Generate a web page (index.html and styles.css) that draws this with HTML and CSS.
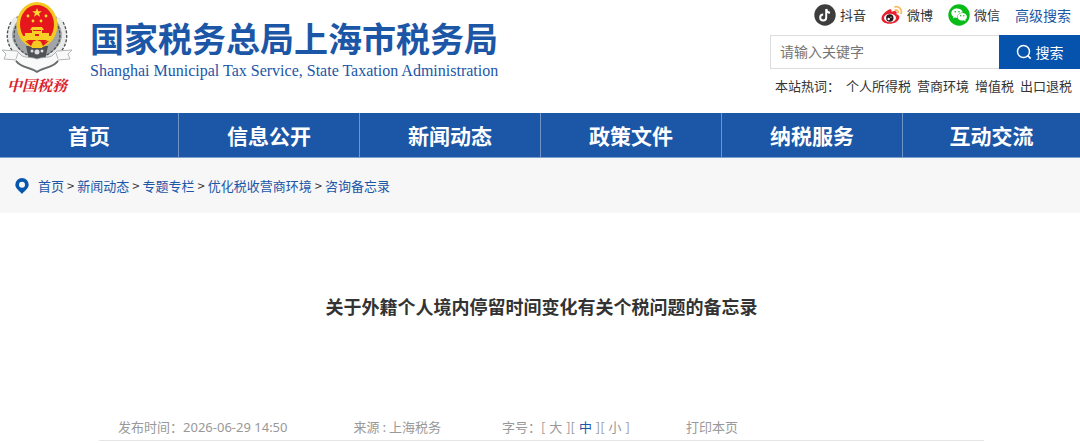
FILE: index.html
```html
<!DOCTYPE html>
<html lang="zh-CN">
<head>
<meta charset="utf-8">
<meta name="viewport" content="width=device-width, initial-scale=1">
<title>国家税务总局上海市税务局</title>
<link rel="stylesheet" href="styles.css">
</head>
<body>
<header class="header">
  <a class="brand" href="#">
    <span class="brand-mark">
      <svg class="emblem" viewBox="0 0 74 74" aria-hidden="true">
        <path d="M17 16C5 30 6 50 27 61h19C67 50 68 30 56 16z" fill="#a2a5a7"/>
        <g fill="none" stroke="#e9eaea" stroke-width="5" stroke-dasharray="3 2" stroke-linecap="round">
          <path d="M15 20C5 34 9 49 27 58M59 20C69 34 65 49 47 58"/>
        </g>
        <g fill="none" stroke="#4b4e50" stroke-width="1.300" stroke-dasharray="3 1.500">
          <path d="M11 22C3 37 8 52 25 61M63 22C71 37 66 52 49 61M16 26C11 39 16 49 29 56M58 26C63 39 58 49 45 56"/>
        </g>
        <path d="M26 46h22l-3 14H29z" fill="#505355"/>
        <g fill="#dcddde"><circle cx="32" cy="51" r="1.500"/><circle cx="37" cy="52" r="2.500"/><circle cx="42" cy="51" r="1.500"/></g>
        <ellipse cx="37" cy="25" rx="20.500" ry="23" fill="#f3c922"/>
        <ellipse cx="37" cy="24.500" rx="17" ry="19.500" fill="#e5171c"/>
        <path fill="#ffd92e" d="M37 8l1.300 3.300h3.500l-2.800 2.100 1.100 3.400-3.100-2.100-3.100 2.100 1.100-3.400-2.800-2.100h3.500z"/>
        <g fill="#ffd92e"><circle cx="28" cy="16" r="1.400"/><circle cx="46" cy="16" r="1.400"/><circle cx="33" cy="21" r="1.400"/><circle cx="41" cy="21" r="1.400"/></g>
        <path fill="#f7cf27" d="M32 27h10l2 3h-2v3h7v4H25v-4h7v-3h-2zM22 36h30l-2 4H24z"/>
        <path fill="#e5171c" d="M33 30h8v1h-8zM35 34h4v2h-4z"/>
        <path fill="#f3c922" d="M30 43l7-3 7 3-2 5H32z"/>
        <path fill="#e5171c" d="M25 41l8 1-2 4zM49 41l-8 1 2 4z"/>
        <path fill="#f9f9f9" stroke="#a0a3a5" stroke-width=".8" d="M2 50l15 1 5 5c5 2 11 1 15 3 4-2 10-1 15-3l5-5 15-1-4 4 2 5-12 1-6 6c-5 1-10 2-15 5-5-3-10-4-15-5l-6-6-12-1 2-5z"/>
        <path fill="none" stroke="#6a6d6f" stroke-width="1.800" d="M16 61c5 7 14 6 21 11 7-5 16-4 21-11"/>
        <path fill="none" stroke="#b9bbbc" d="M18 53l-2 6M56 53l2 6"/>
      </svg>
      <span class="brand-script">中国税務</span>
    </span>
    <span class="brand-text">
      <span class="brand-cn">国家税务总局上海市税务局</span>
      <span class="brand-en" lang="en">Shanghai Municipal Tax Service, State Taxation Administration</span>
    </span>
  </a>
  <div class="tools">
    <nav class="social" aria-label="社交媒体">
      <a class="social-link" href="#">
        <svg class="social-icon" viewBox="0 0 22 22" aria-hidden="true"><circle cx="11" cy="11" r="10.700" fill="#3d3d3d"/><path d="M12.200 5v8.500a3 3 0 1 1-3-3M12.200 5c.3 2.300 1.700 3.500 3.800 3.700" fill="none" stroke="#fff" stroke-width="2"/></svg>
        抖音</a>
      <a class="social-link" href="#">
        <svg class="social-icon" viewBox="0 0 22 22" aria-hidden="true"><path fill="#e71f2e" d="M9 5.300c1.200-.5 2 .5 1.400 2.500 3-1.200 5.700-1.200 5.200 1.600-.2.700 0 .9.800 1.200 1.700.7 2.300 2 1.800 3.600-1 3.300-5 5.500-9.700 5.500C4 19.700.5 17.500.5 14.200.5 11 5.300 6.400 9 5.300z"/><ellipse cx="9" cy="14" rx="6" ry="4.200" fill="#fff"/><circle cx="8.800" cy="14" r="3.700" fill="#28191b"/><circle cx="7.700" cy="15" r="1.200" fill="#fff"/><circle cx="10" cy="13.200" r=".6" fill="#fff"/><path d="M14 2.800c4-.8 7.300 2.600 6.200 6.500M14.300 6c2-.3 3.200 1 2.700 2.700" fill="none" stroke="#f9bd62" stroke-width="1.800" stroke-linecap="round"/></svg>
        微博</a>
      <a class="social-link" href="#">
        <svg class="social-icon" viewBox="0 0 22 22" aria-hidden="true"><circle cx="11" cy="11" r="10.700" fill="#09bb16"/><path fill="#fff" d="M9 4.500c-3.200 0-5.700 2-5.700 4.600 0 1.500.8 2.800 2.100 3.700l-.5 1.800 2-1c.8.200 1.500.3 2.300.3-.6-3 2-5.600 5.600-5.500C14.300 6 11.900 4.500 9 4.500z"/><path fill="#fff" d="M14.200 9c-2.700 0-4.700 1.700-4.700 3.800s2 3.800 4.700 3.800c.6 0 1.200-.1 1.700-.3l1.700.9-.4-1.500c1.100-.7 1.700-1.700 1.700-2.900 0-2.100-2-3.800-4.700-3.800z"/><g fill="#09bb16"><circle cx="7.200" cy="7.800" r=".8"/><circle cx="11" cy="7.800" r=".8"/><circle cx="12.700" cy="11.800" r=".7"/><circle cx="15.800" cy="11.800" r=".7"/></g></svg>
        微信</a>
      <a class="advanced" href="#">高级搜索</a>
    </nav>
    <form class="search" role="search">
      <input class="search-input" type="text" placeholder="请输入关键字" aria-label="请输入关键字">
      <button class="search-button" type="button">
        <svg class="search-icon" viewBox="0 0 16 16" aria-hidden="true"><circle cx="7.500" cy="7.500" r="6" fill="none" stroke="#fff" stroke-width="1.500"/><path d="M11.700 11.700l3 3" stroke="#fff" stroke-width="1.700"/></svg>
        搜索</button>
    </form>
    <div class="hot">
      <span class="hot-label">本站热词：</span>
      <a href="#">个人所得税</a>
      <a href="#">营商环境</a>
      <a href="#">增值税</a>
      <a href="#">出口退税</a>
    </div>
  </div>
</header>
<nav class="main-nav" aria-label="主导航">
  <a href="#">首页</a>
  <a href="#">信息公开</a>
  <a href="#">新闻动态</a>
  <a href="#">政策文件</a>
  <a href="#">纳税服务</a>
  <a href="#">互动交流</a>
</nav>
<nav class="crumbs" aria-label="当前位置">
  <svg class="pin" viewBox="0 0 14 16" aria-hidden="true"><path fill="#0756ad" fill-rule="evenodd" d="M7 0a6.700 6.700 0 0 1 6.700 6.800C13.700 10.500 9.500 13 7 16 4.500 13 .3 10.500.3 6.800A6.700 6.700 0 0 1 7 0zm0 3.800a3 3 0 1 0 0 6 3 3 0 0 0 0-6z"/></svg>
  <a href="#">首页</a><span>&gt;</span>
  <a href="#">新闻动态</a><span>&gt;</span>
  <a href="#">专题专栏</a><span>&gt;</span>
  <a href="#">优化税收营商环境</a><span>&gt;</span>
  <a href="#">咨询备忘录</a>
</nav>
<main class="article">
  <h1 class="article-title">关于外籍个人境内停留时间变化有关个税问题的备忘录</h1>
  <div class="meta">
    <div class="meta-date"><span>发布时间：</span><time datetime="2026-06-29T14:50">2026-06-29 14:50</time></div>
    <div class="meta-source">来源 : 上海税务</div>
    <div class="meta-size">
      <span>字号：</span>
      <span>[ <button type="button">大</button> ]</span>
      <span>[ <button class="is-active" type="button">中</button> ]</span>
      <span>[ <button type="button">小</button> ]</span>
    </div>
    <button class="print" type="button">打印本页</button>
  </div>
</main>
</body>
</html>
```
FILE: styles.css
```css
* {
  box-sizing: border-box;
}

body {
  margin: 0;
  background: #fff;
  color: #333;
  font-family: "Noto Sans CJK SC", sans-serif;
  font-size: 13px;
  line-height: 20px;
}

a {
  color: inherit;
  text-decoration: none;
}

button {
  padding: 0;
  border: 0;
  background: none;
  color: inherit;
  font: inherit;
  cursor: pointer;
}

.header {
  display: flex;
  justify-content: space-between;
  min-height: 113px;
}

.brand {
  display: flex;
  gap: 16px;
}

.brand-mark {
  display: flex;
  flex-direction: column;
  align-items: center;
  width: 74px;
}

.emblem {
  width: 74px;
  height: 74px;
}

.brand-script {
  color: #d9202a;
  font-family: "Noto Serif CJK SC", "Noto Sans CJK SC", serif;
  font-size: 15px;
  font-style: italic;
  font-weight: 700;
  line-height: 22px;
}

.brand-text {
  display: flex;
  flex-direction: column;
  padding-top: 17px;
  color: #1b56a7;
  white-space: nowrap;
}

.brand-cn {
  font-size: 34px;
  font-weight: 700;
  line-height: 42px;
}

.brand-en {
  font-family: "Liberation Serif", serif;
  font-size: 16px;
  line-height: 24px;
}

.tools {
  display: flex;
  flex-direction: column;
  width: 310px;
}

.social {
  display: flex;
  align-items: center;
  justify-content: flex-end;
  gap: 15px;
  height: 30px;
  margin-bottom: 5px;
  padding-right: 9px;
}

.social-link {
  display: flex;
  align-items: center;
  gap: 4px;
}

.social-icon {
  width: 22px;
  height: 22px;
}

.advanced {
  color: #1b56a7;
  font-size: 14px;
}

.search {
  display: flex;
  height: 34px;
}

.search-input {
  flex: 1;
  min-width: 0;
  padding: 0 9px 2px;
  border: 1px solid #ddd;
  border-right: 0;
  font: inherit;
  font-size: 14px;
}

.search-input::placeholder {
  color: #757575;
}

.search-button {
  display: flex;
  align-items: center;
  justify-content: center;
  gap: 4px;
  width: 81px;
  background: #0653ae;
  color: #fff;
  font-size: 14px;
}

.search-icon {
  width: 16px;
  height: 16px;
}

.hot {
  display: flex;
  justify-content: flex-end;
  gap: 6px;
  padding: 7px 8px 0 0;
  white-space: nowrap;
}

.main-nav {
  display: grid;
  grid-template-columns: 178fr repeat(4, 181fr) 178fr;
  border-bottom: 1px solid #7d9fcd;
  background: #1b56a7;
  color: #fff;
  font-size: 21px;
  font-weight: 700;
  line-height: 44px;
  text-align: center;
}

.main-nav a + a {
  border-left: 1px solid #7295c8;
}

.crumbs {
  display: flex;
  align-items: center;
  gap: 3px;
  min-height: 55px;
  padding: 0 15px;
  background: #f7f7f7;
  color: #1b56a7;
}

.crumbs span {
  color: #333;
}

.pin {
  width: 14px;
  height: 16px;
  margin-right: 6px;
}

.article {
  margin: 0 96px 0 99px;
}

.article-title {
  margin: 0;
  padding: 79px 0 95px;
  color: #333;
  font-size: 18px;
  font-weight: 700;
  line-height: 28px;
  text-align: center;
}

.meta {
  display: flex;
  padding: 2px 19px 3px;
  border-bottom: 1px solid #e6e6e6;
  color: #999;
  white-space: nowrap;
}

.meta-date {
  margin-right: 66px;
}

.meta-date time {
  font-family: "Noto Sans", sans-serif;
}

.meta-source {
  margin-right: 61px;
}

.meta-size {
  display: flex;
  margin-right: 56px;
}

.meta-size button {
  padding: 0 1px;
}

.meta-size .is-active {
  color: #1b56a7;
}
```
